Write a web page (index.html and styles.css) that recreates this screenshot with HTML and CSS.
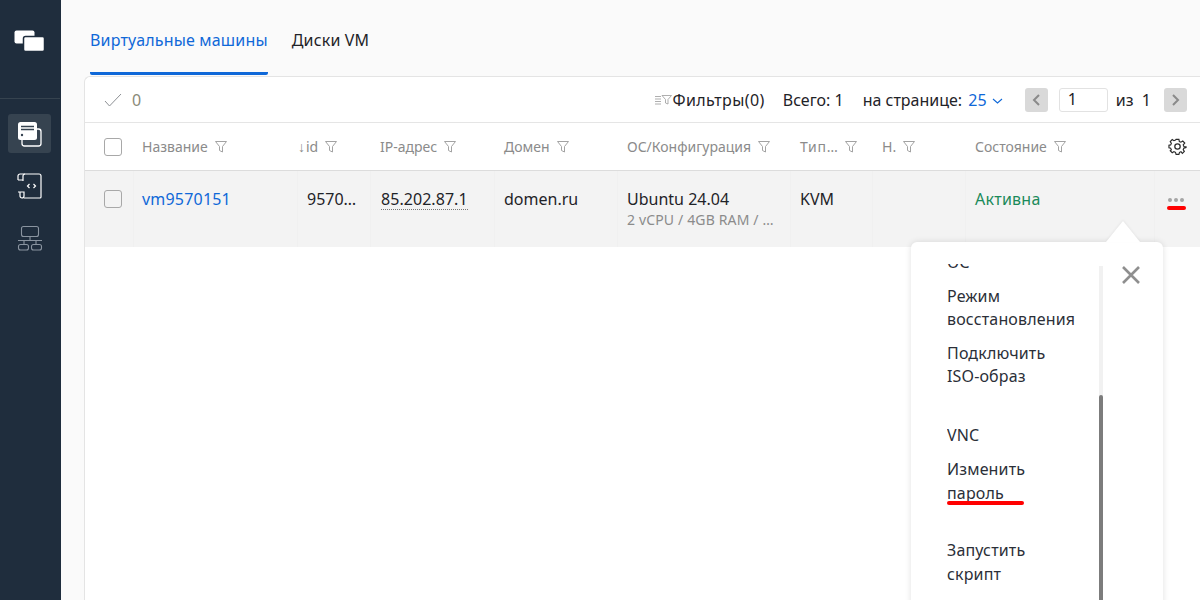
FILE: index.html
```html
<!DOCTYPE html>
<html lang="ru">
<head>
<meta charset="utf-8">
<title>Виртуальные машины</title>
<link rel="stylesheet" href="styles.css">
</head>
<body>
<div class="app">
  <aside class="sidebar">
    <div class="logo">
      <svg width="32" height="22" viewBox="0 0 32 22"><rect x="0.5" y="0.5" width="20" height="13" rx="2" fill="#fff"/><rect x="9.5" y="6.5" width="21" height="15" rx="2" fill="#fff" stroke="#1f2d3d" stroke-width="1.5"/></svg>
    </div>
    <div class="side-sep"></div>
    <nav class="side-nav">
      <div class="side-item active">
        <svg width="26" height="26" viewBox="0 0 26 26" fill="none"><rect x="5" y="8" width="19" height="17" rx="2.5" stroke="#fff" stroke-width="1.3"/><rect x="1" y="1" width="19" height="18" rx="2.5" fill="#fff"/><path d="M4 5.500h13M4 8.500h13" stroke="#364350" stroke-width="1.400"/><circle cx="5" cy="14" r="1.200" fill="#364350"/></svg>
      </div>
      <div class="side-item">
        <svg width="26" height="26" viewBox="0 0 26 26" fill="none" stroke="#fff" stroke-width="1.200"><path d="M6 8V3a2 2 0 0 1 2-2h14a2 2 0 0 1 2 2v21a1 1 0 0 1-1 1H7"/><path d="M1 7V3a2 2 0 0 1 2-2h5M1 7h5M1 19h6v4a2 2 0 0 1-2 2 2 2 0 0 1-2-2v-4"/><path d="M12.500 11l-2 2 2 2M16.500 11l2 2-2 2"/></svg>
      </div>
      <div class="side-item dim">
        <svg width="26" height="26" viewBox="0 0 26 26" fill="none" stroke="#8a94a0" stroke-width="1.100"><rect x="4.500" y="1.500" width="17" height="10" rx="2"/><path d="M13 11.500v4M1 15.500h24M7 15.500v4M19 15.500v4"/><rect x="1.500" y="19.500" width="10" height="5.500" rx="2"/><rect x="14.500" y="19.500" width="10" height="5.500" rx="2"/></svg>
      </div>
    </nav>
  </aside>
  <main class="main">
    <div class="tabs">
      <div class="tab active">Виртуальные машины</div>
      <div class="tab">Диски VM</div>
    </div>
    <section class="panel">
      <div class="toolbar">
        <div class="selected">
          <svg width="18" height="14" viewBox="0 0 18 14" fill="none"><path d="M1 8l4.500 5L17 1" stroke="#8d9094" stroke-width="1"/></svg>
          <span class="sel-count">0</span>
        </div>
        <div class="tools">
          <div class="filters">
            <svg width="17" height="10" viewBox="0 0 17 10" fill="none" stroke="#9a9a9a" stroke-width="0.800"><path d="M0 1.500h6M0 4h6M0 6.500h6M0 9h6M7 .5h9.500L13 4.500V9l-2.500-1V4.500z"/></svg>
            <span class="filters-label">Фильтры(0)</span>
          </div>
          <span class="total">Всего: 1</span>
          <span class="per-page">на странице: <span class="link per-val">25</span>
            <svg class="chev" width="11" height="6" viewBox="0 0 11 6" fill="none"><path d="M1 1l4.500 4L10 1" stroke="#0f68d8" stroke-width="1.100"/></svg>
          </span>
          <div class="pager">
            <div class="page-btn"><svg width="9" height="12" viewBox="0 0 9 12" fill="none"><path d="M7 1L2 6l5 5" stroke="#8a8a8a" stroke-width="2"/></svg></div>
            <div class="page-input">1</div>
            <span class="page-of">из&nbsp; 1</span>
            <div class="page-btn"><svg width="9" height="12" viewBox="0 0 9 12" fill="none"><path d="M2 1l5 5-5 5" stroke="#8a8a8a" stroke-width="2"/></svg></div>
          </div>
        </div>
      </div>
      <div class="grid head">
        <div class="cell"><span class="check"></span></div>
        <div class="cell name-cell">Название<svg class="fi"><use href="#funnel"/></svg></div>
        <div class="cell id-cell"><span class="arrow">↓</span>id<svg class="fi"><use href="#funnel"/></svg></div>
        <div class="cell">IP-адрес<svg class="fi"><use href="#funnel"/></svg></div>
        <div class="cell">Домен<svg class="fi"><use href="#funnel"/></svg></div>
        <div class="cell">ОС/Конфигурация<svg class="fi"><use href="#funnel"/></svg></div>
        <div class="cell type-head">Тип…<svg class="fi"><use href="#funnel"/></svg></div>
        <div class="cell">Н.<svg class="fi"><use href="#funnel"/></svg></div>
        <div class="cell">Состояние<svg class="fi"><use href="#funnel"/></svg></div>
        <div class="cell gear-cell">
          <svg width="19" height="19" viewBox="0 0 24 24" fill="none" stroke="#2a2a2a" stroke-width="1.600"><circle cx="12" cy="12" r="3.400"/><path d="M10 2h4l.6 3 2.200 1 2.600-1.600 2.800 2.800L20 9.800l1 2.200 3 .6v-1 2l-3 .6-1 2.200 1.600 2.600-2.800 2.800L17 19.200l-2.200 1-.8 2.800h-4l-.8-2.800-2.200-1-2.400 1.600-2.800-2.800L3.400 16.600l-1-2.200L0 13.800v-3.600l2.400-.4 1-2.200L1.800 5l2.800-2.800L7 3.800l2.200-1z" transform="translate(1.200 1.200) scale(.9)"/></svg>
        </div>
      </div>
      <div class="grid row">
        <div class="cell"><span class="check"></span></div>
        <div class="cell name-cell"><a class="link vm-link">vm9570151</a></div>
        <div class="cell id-val">9570…</div>
        <div class="cell"><span class="ip">85.202.87.1</span></div>
        <div class="cell">domen.ru</div>
        <div class="cell os"><div>Ubuntu 24.04</div><div class="sub">2 vCPU / 4GB RAM / …</div></div>
        <div class="cell">KVM</div>
        <div class="cell"></div>
        <div class="cell active-state">Активна</div>
        <div class="cell dots-cell"><span class="dots"><i></i><i></i><i></i></span></div>
      </div>
    </section>
  </main>
  <div class="popup">
    <span class="popup-arrow"></span>
    <div class="popup-body">
      <div class="menu-clip">
        <ul class="menu">
          <li>ОС</li>
          <li>Режим восстановления</li>
          <li>Подключить ISO-образ</li>
          <li class="spaced">VNC</li>
          <li class="marked">Изменить пароль</li>
          <li class="spaced">Запустить скрипт</li>
        </ul>
      </div>
      <div class="scroll-track"><div class="scroll-thumb"></div></div>
      <svg class="close" width="20" height="20" viewBox="0 0 20 20" fill="none"><path d="M2 2l16 16M18 2L2 18" stroke="#8f8f8f" stroke-width="2.600"/></svg>
    </div>
  </div>
</div>
<svg class="defs" width="0" height="0"><defs><g id="funnel"><path d="M.5 .5h11L7.500 5.500V11L4.500 9.500V5.500z" fill="none" stroke="#a3a3a3" stroke-width="1"/></g></defs></svg>
</body>
</html>
```
FILE: styles.css
```css
* { box-sizing: border-box; }
html, body { margin: 0; height: 100%; overflow: hidden; }
body { font-family: "Noto Sans", "Open Sans", sans-serif; font-size: 16px; color: #1f2328; background: #fafafa; }
.defs { display: block; }
.app { display: flex; height: 600px; position: relative; overflow: hidden; }

.sidebar { width: 61px; flex: none; background: #1f2d3d; }
.logo { height: 98px; padding: 30px 0 0 14px; }
.logo svg { display: block; }
.side-sep { height: 1px; margin-right: 1px; background: #36434f; }
.side-nav { display: flex; flex-direction: column; gap: 13px; padding: 15px 0 0 8px; }
.side-item { width: 43px; height: 39px; border-radius: 3px; display: flex; align-items: center; justify-content: center; }
.side-item.active { background: #364350; }

.main { flex: 1; min-width: 0; padding-left: 23px; }
.tabs { display: flex; gap: 24px; height: 76px; padding: 0 0 0 6px; letter-spacing: .17px; }
.tab { padding-top: 28px; height: 75px; line-height: 24px; color: #1f2328; }
.tab.active { color: #0f68d8; border-bottom: 3px solid #0f68d8; border-radius: 0 0 2px 2px; }

.panel { background: #fff; border: 1px solid #e4e4e4; border-right: 0; border-bottom: 0; border-radius: 6px 0 0 0; height: 524px; }
.toolbar { display: flex; justify-content: space-between; align-items: center; height: 46px; padding: 0 13px 0 19px; border-bottom: 1px solid #e5e5e5; }
.selected { display: flex; align-items: center; gap: 10px; }
.sel-count { color: #8a8a78; }
.tools { display: flex; align-items: center; }
.filters { display: flex; align-items: center; gap: 1px; margin-right: 18px; }
.filters-label { letter-spacing: .4px; }
.total { margin-right: 19px; }
.per-page { margin-right: 22px; }
.per-val { margin-left: 2px; }
.chev { margin-left: 1px; vertical-align: 2px; }
.link { color: #0f68d8; }
.pager { display: flex; align-items: center; }
.page-btn { width: 23px; height: 24px; background: #d9d9d9; border-radius: 3px; display: flex; align-items: center; justify-content: center; }
.page-input { width: 49px; height: 24px; margin: 0 8px 0 11px; padding-left: 8px; border: 1px solid #e2e2e2; border-radius: 3px; line-height: 20px; background: #fff; }
.page-of { margin-right: 13px; }

.grid { display: grid; grid-template-columns: 48px 164px 73px 124px 123px 173px 82px 93px 189px 46px; }
.head { height: 48px; border-bottom: 1px solid #dcdcdc; font-size: 14px; color: #8b8b8b; }
.head .cell { white-space: nowrap; }
.head .fi { margin-left: 7px; }
.head .type-head { letter-spacing: .7px; }
.row { height: 76px; background: #f3f3f3; }
.cell { padding-left: 10px; display: flex; align-items: center; }
.row .cell { align-items: flex-start; padding-top: 16px; padding-left: 9px; line-height: 24px; border-left: 1px solid #f0f0f0; }
.row .cell:first-child { border-left: 0; padding-left: 10px; }
.check { display: block; width: 18px; height: 18px; margin-left: 9px; border: 1px solid #a8a8a8; border-radius: 3px; background: transparent; }
.row .check { margin-top: 3px; }
.name-cell { padding-left: 9px; }
.row .name-cell { padding-left: 8px; }
.vm-link { letter-spacing: .2px; }
.fi { width: 12px; height: 12px; }
.id-cell { padding-left: 1px; }
.arrow { font-size: 14px; margin-right: 1px; }
.ip { border-bottom: 1px dotted #777; line-height: 20px; margin: 2px 0 0 1px; letter-spacing: .05px; }
.os { flex-direction: column; }
.sub { font-size: 14px; color: #8b8b8b; line-height: 18px; white-space: nowrap; letter-spacing: .15px; }
.active-state { color: #1b8a5a; letter-spacing: .25px; }
.gear-cell { padding-left: 14px; }
.dots-cell { position: relative; }
.dots { display: flex; gap: 2px; margin: 11px 0 0 4px; }
.dots i { width: 4px; height: 4px; border-radius: 50%; background: #a5a5a5; }
.dots::after { content: ""; position: absolute; left: 12px; top: 35px; width: 19px; height: 4px; border-radius: 2px; background: #f00; }

.popup { position: absolute; left: 911px; top: 242px; width: 252px; height: 400px; background: #fff; border-radius: 6px; box-shadow: 0 0 6px rgba(0,0,0,.12); }
.popup-arrow { position: absolute; left: 195px; top: -21px; width: 0; height: 0; border: 17px solid transparent; border-top-width: 0; border-bottom: 21px solid #fff; filter: drop-shadow(0 -1px 1px rgba(0,0,0,.06)); }
.popup-body { position: relative; height: 100%; }
.menu-clip { position: absolute; left: 36px; top: 22px; width: 132px; height: 360px; overflow: hidden; }
.menu { list-style: none; margin: -13px 0 0; padding: 0; display: flex; flex-direction: column; gap: 10px; color: #2b2f38; line-height: 23.500px; letter-spacing: .15px; }
.menu .spaced { margin-top: 24px; }
.menu li:nth-child(4) { margin-top: 25px; }
.menu .marked { position: relative; margin-top: 1px; }
.menu .marked::after { content: ""; position: absolute; left: 0; top: 43px; width: 77px; height: 4px; border-radius: 2px; background: #f00; }
.scroll-track { position: absolute; left: 188px; top: 24px; width: 4px; height: 376px; background: #f1f1f1; }
.scroll-thumb { margin-top: 129px; height: 247px; background: #7c7c7c; border-radius: 2px 2px 0 0; }
.close { position: absolute; left: 210px; top: 23px; }
```
